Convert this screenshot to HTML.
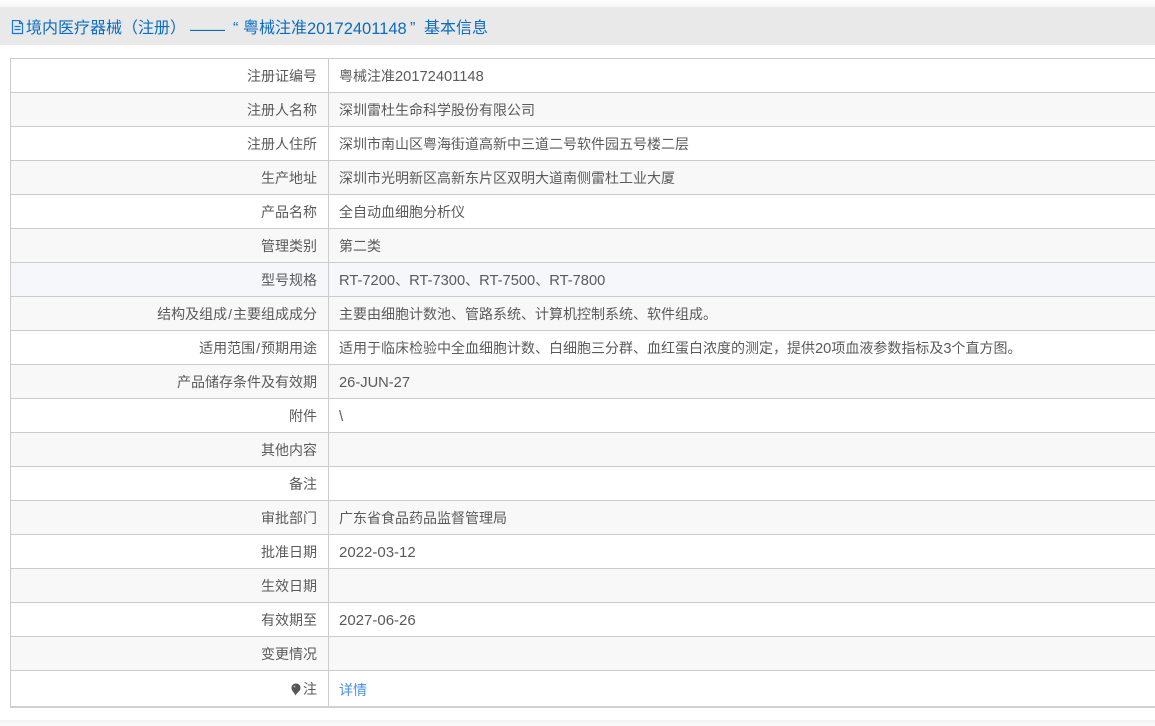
<!DOCTYPE html>
<html lang="zh-CN">
<head>
<meta charset="utf-8">
<title>基本信息</title>
<style>
html,body{margin:0;padding:0;background:#fff}
body{width:1155px;height:726px;overflow:hidden;position:relative;font-family:"Liberation Sans","Noto Sans CJK SC",sans-serif;font-size:14px;color:#5a5a5a}
#top{position:absolute;left:0;top:0;width:1155px;height:7px;background:linear-gradient(#fff,#f6f6f6)}
#hd{position:absolute;left:0;top:7px;width:1155px;height:38px;background:#e9e9e9;color:#0a6cc4;font-size:16px;line-height:44px;white-space:nowrap}
#hd svg{position:absolute;left:11px;top:13px}
#hd span{position:absolute;top:0}
#tb{position:absolute;left:10px;top:58px;width:1145px;height:650px;border-top:1px solid #ccc;border-left:1px solid #ccc;border-bottom:2px solid #cfcfd6;box-sizing:border-box}
.r{position:absolute;left:0;width:1144px;height:34px;box-sizing:border-box;border-bottom:1px solid #ccc;line-height:34px;white-space:nowrap}
.l{position:absolute;left:0;top:0;width:318px;height:100%;box-sizing:border-box;border-right:1px solid #ccc;text-align:right;padding-right:11px}
.v{position:absolute;left:328px;top:0}
.g{background:#f8f8f8}.b{background:#f6f7fb}
.n{font-size:14.7px}
.d{font-size:15px}
.s{padding:0 1px}
#bot{position:absolute;left:0;top:720px;width:1155px;height:6px;background:linear-gradient(#f1f1f1,#fbfbfb)}
a{color:#4a8fe8;text-decoration:none}
</style>
</head>
<body>
<div id="top"></div>
<div id="hd"><svg width="13" height="15" viewBox="0 0 13 15"><path d="M1.500.5H8.500L11.500 3.500V13.500H1.500ZM8.500.5V3.500H11.500M3.500 6.500H9.500M3.500 9.500H9.500" fill="none" stroke="#1578d8" stroke-width="1.200"/></svg><span style="left:26px">境内医疗器械</span><span style="left:122px">（注册）</span><span style="left:190px;font-size:17.500px">——</span><span style="left:233px">“</span><span style="left:243px">粤械注准</span><span style="left:307px;font-size:16.500px">20172401148</span><span style="left:410px">”</span><span style="left:424px">基本信息</span></div>
<div id="tb">
<div class="r" style="top:0"><div class="l">注册证编号</div><div class="v">粤械注准<span class="n">20172401148</span></div></div>
<div class="r g" style="top:34px"><div class="l">注册人名称</div><div class="v">深圳雷杜生命科学股份有限公司</div></div>
<div class="r" style="top:68px"><div class="l">注册人住所</div><div class="v">深圳市南山区粤海街道高新中三道二号软件园五号楼二层</div></div>
<div class="r g" style="top:102px"><div class="l">生产地址</div><div class="v">深圳市光明新区高新东片区双明大道南<span style="color:#6b5a4a">侧</span>雷杜工业大厦</div></div>
<div class="r" style="top:136px"><div class="l">产品名称</div><div class="v">全自动血细胞分析仪</div></div>
<div class="r g" style="top:170px"><div class="l">管理类别</div><div class="v">第二类</div></div>
<div class="r b" style="top:204px"><div class="l">型号规格</div><div class="v"><span class="n">RT-7200</span>、<span class="n">RT-7300</span>、<span class="n">RT-7500</span>、<span class="n">RT-7800</span></div></div>
<div class="r g" style="top:238px"><div class="l">结构及组成<span class="s">/</span>主要组成成分</div><div class="v">主要由细胞计数池、管路系统、计算机控制系统、软件组成。</div></div>
<div class="r" style="top:272px"><div class="l">适用范围<span class="s">/</span>预期用途</div><div class="v">适用于临床检验中全血细胞计数、白细胞三分群、血红蛋白浓度的测定，提供<span class="n">20</span>项血液参数指标及<span class="n">3</span>个直方图。</div></div>
<div class="r g" style="top:306px"><div class="l">产品储存条件及有效期</div><div class="v"><span class="n">26-JUN-27</span></div></div>
<div class="r" style="top:340px"><div class="l">附件</div><div class="v"><span class="d">\</span></div></div>
<div class="r g" style="top:374px"><div class="l">其他内容</div><div class="v"></div></div>
<div class="r" style="top:408px"><div class="l">备注</div><div class="v"></div></div>
<div class="r g" style="top:442px"><div class="l">审批部门</div><div class="v">广东省食品药品监督管理局</div></div>
<div class="r" style="top:476px"><div class="l">批准日期</div><div class="v"><span class="d">2022-03-12</span></div></div>
<div class="r g" style="top:510px"><div class="l">生效日期</div><div class="v"></div></div>
<div class="r" style="top:544px"><div class="l">有效期至</div><div class="v"><span class="d">2027-06-26</span></div></div>
<div class="r g" style="top:578px"><div class="l">变更情况</div><div class="v"></div></div>
<div class="r" style="top:612px;height:35px;border-bottom:0;line-height:37px"><div class="l"><svg width="10" height="13" viewBox="0 0 10 13" style="vertical-align:-2px;margin-right:2px"><path d="M5 .5C2.300.5.500 2.300.500 5C.500 8 3.500 9.500 4.500 12.500C6 9.500 9.500 8 9.500 5C9.500 2.300 7.700.5 5 .5Z" fill="#555"/><circle cx="3.500" cy="3.500" r="1" fill="#aaa"/></svg>注</div><div class="v" style="top:1px"><a>详情</a></div></div>
</div>
<div id="bot"></div>
</body>
</html>
